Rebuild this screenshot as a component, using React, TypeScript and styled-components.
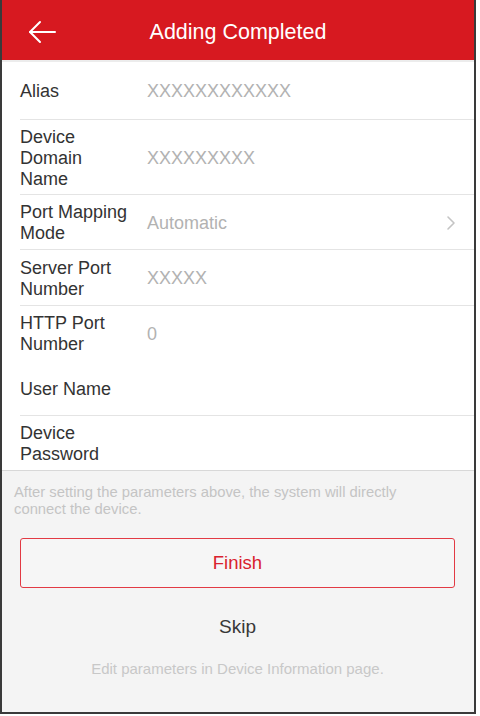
import React from "react";
import styled, { createGlobalStyle } from "styled-components";

const Global = createGlobalStyle`
  html, body { margin: 0; padding: 0; background: #ffffff; }
  body { font-family: "Liberation Sans", Arial, sans-serif; }
`;

const Frame = styled.div`
  width: 472px;
  height: 712px;
  border-left: 2px solid #3a3a3a;
  border-right: 2px solid #3a3a3a;
  border-bottom: 2px solid #3a3a3a;
  background: #f4f4f4;
  display: flex;
  flex-direction: column;
  overflow: hidden;
`;

const Header = styled.header`
  height: 60px;
  background: #d71920;
  display: flex;
  align-items: center;
  position: relative;
  border-bottom: 2px solid #ececec;
  flex-shrink: 0;
`;

const BackButton = styled.button`
  position: absolute;
  left: 20px;
  top: 15px;
  width: 40px;
  height: 34px;
  background: none;
  border: none;
  padding: 0;
  display: flex;
  align-items: center;
  justify-content: center;
`;

const Title = styled.h1`
  flex: 1;
  margin: 0;
  text-align: center;
  color: #ffffff;
  font-size: 21.5px;
  font-weight: 400;
  padding-top: 4px;
`;

const List = styled.div`
  background: #ffffff;
  display: flex;
  flex-direction: column;
  border-bottom: 1px solid #d8d8d8;
`;

const Row = styled.div<{ $h: number; $divider: boolean }>`
  height: ${(p) => p.$h}px;
  display: flex;
  align-items: center;
  margin-left: 18px;
  padding: 2px 18px 0 0;
  border-bottom: ${(p) => (p.$divider ? "1px solid #e4e4e4" : "1px solid transparent")};
  box-sizing: border-box;
`;

const Label = styled.div`
  width: 127px;
  flex-shrink: 0;
  font-size: 18px;
  line-height: 21px;
  color: #333333;
  padding-right: 17px;
  box-sizing: border-box;
`;

const Value = styled.div`
  flex: 1;
  font-size: 18px;
  color: #b2b2b2;
`;

const Footer = styled.div`
  display: flex;
  flex-direction: column;
  padding: 13px 19px 0 12px;
`;

const Hint = styled.p`
  margin: 0;
  padding-right: 40px;
  font-size: 14.8px;
  line-height: 17px;
  color: #c4c4c4;
`;

const FinishButton = styled.button`
  margin: 20px 0 0 6px;
  height: 50px;
  border: 1.5px solid #e23a44;
  border-radius: 3px;
  background: #f6f6f6;
  color: #d9222e;
  font-family: inherit;
  font-size: 18.5px;
`;

const SkipButton = styled.button`
  margin: 24px 0 0 6px;
  background: none;
  border: none;
  color: #383838;
  font-family: inherit;
  font-size: 19px;
  height: 30px;
`;

const Note = styled.p`
  margin: 18px 0 0 6px;
  text-align: center;
  font-size: 15px;
  color: #c8c8c8;
`;

type Item = { label: string; value?: string; h: number; divider: boolean; chevron?: boolean };

const items: Item[] = [
  { label: "Alias", value: "XXXXXXXXXXXX", h: 58, divider: true },
  { label: "Device Domain Name", value: "XXXXXXXXX", h: 75, divider: true },
  { label: "Port Mapping Mode", value: "Automatic", h: 55, divider: true, chevron: true },
  { label: "Server Port Number", value: "XXXXX", h: 56, divider: true },
  { label: "HTTP Port Number", value: "0", h: 55, divider: false },
  { label: "User Name", h: 55, divider: true },
  { label: "Device Password", h: 54, divider: false },
];

export default function App() {
  return (
    <>
      <Global />
      <Frame>
        <Header>
          <BackButton aria-label="Back">
            <svg width="30" height="24" viewBox="0 0 30 24" fill="none" stroke="#ffffff" strokeWidth="2" strokeLinecap="round" strokeLinejoin="round">
              <path d="M28 12H3" />
              <path d="M13 2L3 12l10 10" />
            </svg>
          </BackButton>
          <Title>Adding Completed</Title>
        </Header>
        <List>
          {items.map((it) => (
            <Row key={it.label} $h={it.h} $divider={it.divider}>
              <Label>{it.label}</Label>
              <Value>{it.value}</Value>
              {it.chevron && (
                <svg width="10" height="16" viewBox="0 0 10 16" fill="none" stroke="#c4c4c4" strokeWidth="1.6" strokeLinecap="round" strokeLinejoin="round">
                  <path d="M2 2l6 6-6 6" />
                </svg>
              )}
            </Row>
          ))}
        </List>
        <Footer>
          <Hint>After setting the parameters above, the system will directly connect the device.</Hint>
          <FinishButton>Finish</FinishButton>
          <SkipButton>Skip</SkipButton>
          <Note>Edit parameters in Device Information page.</Note>
        </Footer>
      </Frame>
    </>
  );
}
